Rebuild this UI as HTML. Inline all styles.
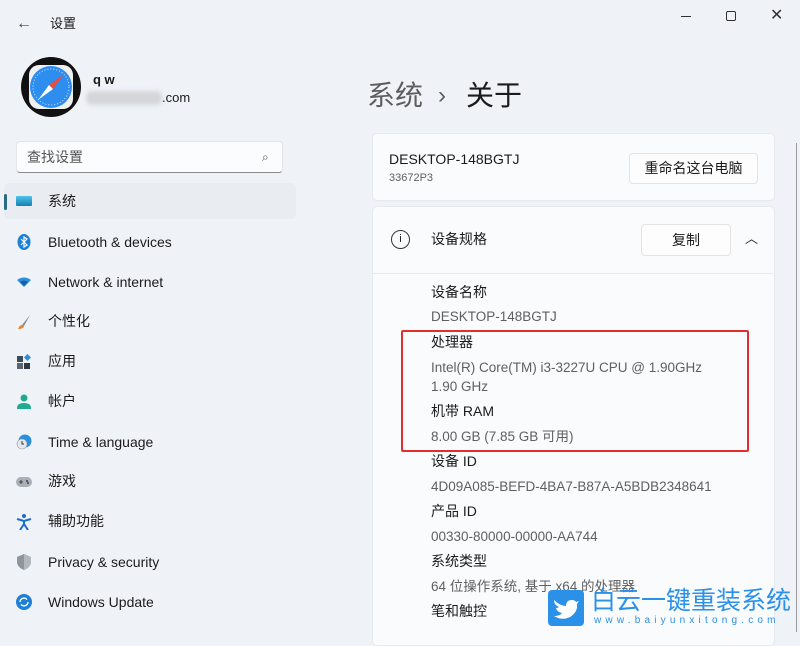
<!DOCTYPE html>
<html><head><meta charset="utf-8"><style>
*{margin:0;padding:0;box-sizing:border-box}
body{width:800px;height:632px;overflow:hidden;background:#eff3f8;font-family:"Liberation Sans","Noto Sans CJK SC",sans-serif;color:#1b1b1b;position:relative;font-size:14px;line-height:20px}
.a{position:absolute;white-space:nowrap}
.ic{position:absolute;left:16px;width:16px;height:16px}
.card{position:absolute;left:372px;width:403px;background:#f9fbfd;border:1px solid #e6e9ed;border-radius:5px}
.lbl{position:absolute;left:431px;font-size:14px;color:#1b1b1b}
.val{position:absolute;left:431px;font-size:13.5px;color:#5f5f5f}
.btn{position:absolute;background:#fdfdfd;border:1px solid #e3e3e3;border-radius:4px;font-size:14px;text-align:center}
</style></head><body>
<div class="a" style="left:16px;top:14px;font-size:16px;color:#444">←</div>
<div class="a" style="left:50px;top:14px;font-size:13px">设置</div>
<div class="a" style="left:681px;top:16px;width:10px;height:1px;background:#333"></div>
<div class="a" style="left:726px;top:11px;width:10px;height:10px;border:1px solid #333;border-radius:2px"></div>
<div class="a" style="left:770px;top:6px;font-size:16px;color:#333">✕</div>

<svg class="a" style="left:21px;top:57px" width="60" height="60"><circle cx="30" cy="30" r="30" fill="#111"/><rect x="8" y="8" width="44" height="44" rx="10" fill="#f0f0f0"/><circle cx="30" cy="30" r="21" fill="#2e8ef0"/><circle cx="30" cy="30" r="18" fill="none" stroke="#cfe6ff" stroke-width="1" stroke-dasharray="1 2"/><polygon points="43,17 32,32 28,28" fill="#f04a3a"/><polygon points="17,43 28,28 32,32" fill="#fff"/></svg>
<div class="a" style="left:93px;top:70px;font-size:13px;font-weight:bold">q w</div>
<div class="a" style="left:86px;top:91px;width:76px;height:14px;background:#d4d6d9;border-radius:6px;filter:blur(2px)"></div>
<div class="a" style="left:162px;top:88px;font-size:13px">.com</div>

<div class="a" style="left:16px;top:141px;width:267px;height:32px;background:#fbfcfd;border:1px solid #e2e4e7;border-bottom:1px solid #8a8a8a;border-radius:4px"></div>
<div class="a" style="left:27px;top:147px;font-size:14px;color:#555">查找设置</div>
<div class="a" style="left:262px;top:147px;font-size:12px;color:#555">⌕</div>

<div class="a" style="left:4px;top:183px;width:292px;height:36px;background:#e9edf1;border-radius:5px"></div>
<div class="a" style="left:4px;top:194px;width:3px;height:16px;background:#2a6a86;border-radius:2px"></div>
<div class="a" style="left:16px;top:196px;width:16px;height:10px;background:linear-gradient(#4cc3ea,#1a7fb2);border-radius:1px"></div>
<div class="a" style="left:48px;top:191px">系统</div>

<svg class="ic" style="top:234px" viewBox="0 0 16 16"><ellipse cx="8" cy="8" rx="6.5" ry="8" fill="#1e7fd6"/><path d="M5 5l6 6-3 2V3l3 2-6 6" stroke="#fff" fill="none" stroke-width="1.2"/></svg>
<div class="a" style="left:48px;top:232px">Bluetooth &amp; devices</div>
<svg class="ic" style="top:274px" viewBox="0 0 16 16"><path d="M1 6q7-5 14 0L8 13z" fill="#2a8fdc"/><path d="M4 8q4-3 8 0L8 12z" fill="#1463a8"/></svg>
<div class="a" style="left:48px;top:272px">Network &amp; internet</div>
<svg class="ic" style="top:314px" viewBox="0 0 16 16"><path d="M14 1L6 11l2 1z" fill="#8a8a8a"/><path d="M6 11c-3 0-3 3-4 4 3 0 6-1 6-3z" fill="#e8862a"/></svg>
<div class="a" style="left:48px;top:311px">个性化</div>
<svg class="ic" style="top:354px" viewBox="0 0 16 16"><rect x="1" y="2" width="6" height="6" fill="#3d4a57"/><rect x="1" y="9" width="6" height="6" fill="#5a6470"/><rect x="8" y="9" width="6" height="6" fill="#2e3842"/><rect x="9" y="1" width="5" height="5" fill="#2a8fdc" transform="rotate(45 11.5 3.5)"/></svg>
<div class="a" style="left:48px;top:351px">应用</div>
<svg class="ic" style="top:394px" viewBox="0 0 16 16"><circle cx="8" cy="4" r="3.5" fill="#22a991"/><path d="M1 14q0-5 7-5t7 5v1H1z" fill="#22a991"/></svg>
<div class="a" style="left:48px;top:391px">帐户</div>
<svg class="ic" style="top:434px" viewBox="0 0 16 16"><circle cx="9" cy="7" r="6.5" fill="#2a8fdc"/><circle cx="6" cy="10" r="5" fill="#e5e8ec" stroke="#999" stroke-width=".6"/><path d="M6 7v3h2" stroke="#333" fill="none"/></svg>
<div class="a" style="left:48px;top:432px">Time &amp; language</div>
<svg class="ic" style="top:474px" viewBox="0 0 16 16"><rect x="0" y="3" width="16" height="10" rx="5" fill="#a9b0b8"/><path d="M3 8h4M5 6v4" stroke="#444"/><circle cx="11" cy="7" r="1" fill="#444"/><circle cx="12" cy="9" r="1" fill="#444"/></svg>
<div class="a" style="left:48px;top:471px">游戏</div>
<svg class="ic" style="top:514px" viewBox="0 0 16 16"><circle cx="8" cy="2" r="2" fill="#1c6fc8"/><path d="M1 5l7 2 7-2M8 7v3l-4 6M8 10l4 6" stroke="#1c6fc8" stroke-width="2" fill="none"/></svg>
<div class="a" style="left:48px;top:511px">辅助功能</div>
<svg class="ic" style="top:554px" viewBox="0 0 16 16"><path d="M8 0l7 3v5c0 4-4 7-7 8-3-1-7-4-7-8V3z" fill="#8e959c"/><path d="M8 0l7 3v5c0 4-4 7-7 8z" fill="#b2b8be"/></svg>
<div class="a" style="left:48px;top:552px">Privacy &amp; security</div>
<svg class="ic" style="top:594px" viewBox="0 0 16 16"><circle cx="8" cy="8" r="8" fill="#1e7fd6"/><path d="M4 8a4 4 0 0 1 7-2.5M12 8a4 4 0 0 1-7 2.5" stroke="#fff" stroke-width="1.4" fill="none"/></svg>
<div class="a" style="left:48px;top:592px">Windows Update</div>

<div class="a" style="left:367px;top:78px;font-size:28px;line-height:36px;color:#5d5d5d">系统</div>
<div class="a" style="left:438px;top:78px;font-size:24px;line-height:36px;color:#5d5d5d">›</div>
<div class="a" style="left:466px;top:78px;font-size:28px;line-height:36px;color:#1b1b1b">关于</div>

<div class="card" style="top:133px;height:68px"></div>
<div class="a" style="left:389px;top:149px;font-size:14px">DESKTOP-148BGTJ</div>
<div class="a" style="left:389px;top:168px;font-size:11px;color:#5f5f5f">33672P3</div>
<div class="btn" style="left:629px;top:153px;width:129px;height:31px;line-height:29px">重命名这台电脑</div>

<div class="card" style="top:206px;height:440px"></div>
<div class="a" style="left:373px;top:273px;width:401px;height:1px;background:#e6e9ed"></div>
<div class="a" style="left:391px;top:230px;width:19px;height:19px;border:1.3px solid #333;border-radius:50%;font-size:11px;text-align:center;line-height:16px">i</div>
<div class="a" style="left:431px;top:229px">设备规格</div>
<div class="btn" style="left:641px;top:224px;width:90px;height:32px;line-height:30px">复制</div>
<div class="a" style="left:745px;top:229px;font-size:13px">︿</div>
<div class="a" style="left:796px;top:143px;width:1px;height:489px;background:#9a9a9a"></div>

<div class="lbl" style="top:282px">设备名称</div>
<div class="val" style="top:307px">DESKTOP-148BGTJ</div>
<div class="lbl" style="top:332px">处理器</div>
<div class="val" style="top:358px">Intel(R) Core(TM) i3-3227U CPU @ 1.90GHz</div>
<div class="val" style="top:377px">1.90 GHz</div>
<div class="lbl" style="top:401px">机带 RAM</div>
<div class="val" style="top:427px">8.00 GB (7.85 GB 可用)</div>
<div class="lbl" style="top:451px">设备 ID</div>
<div class="val" style="top:477px">4D09A085-BEFD-4BA7-B87A-A5BDB2348641</div>
<div class="lbl" style="top:501px">产品 ID</div>
<div class="val" style="top:527px">00330-80000-00000-AA744</div>
<div class="lbl" style="top:551px">系统类型</div>
<div class="val" style="top:577px">64 位操作系统, 基于 x64 的处理器</div>
<div class="lbl" style="top:601px">笔和触控</div>

<div class="a" style="left:401px;top:330px;width:348px;height:122px;border:2px solid #e0302c;border-radius:2px"></div>

<div class="a" style="left:548px;top:590px;width:36px;height:36px;background:#2b90e8;border-radius:4px"></div>
<svg class="a" style="left:552px;top:596px" width="28" height="24" viewBox="0 0 28 24"><path d="M2 4q6 6 12 6 0-6 6-6 3 0 4 2l3-1-2 3q1 8-7 13-8 4-16-1 6 0 8-3-5-1-6-5 2 0 3-1-5-2-5-7z" fill="#fff"/></svg>
<div class="a" style="left:591px;top:587px;font-size:25px;line-height:28px;color:#2b90e8">白云一键重装系统</div>
<div class="a" style="left:594px;top:615px;font-size:10px;line-height:12px;color:#2b90e8;letter-spacing:4.2px">www.baiyunxitong.com</div>
</body></html>
